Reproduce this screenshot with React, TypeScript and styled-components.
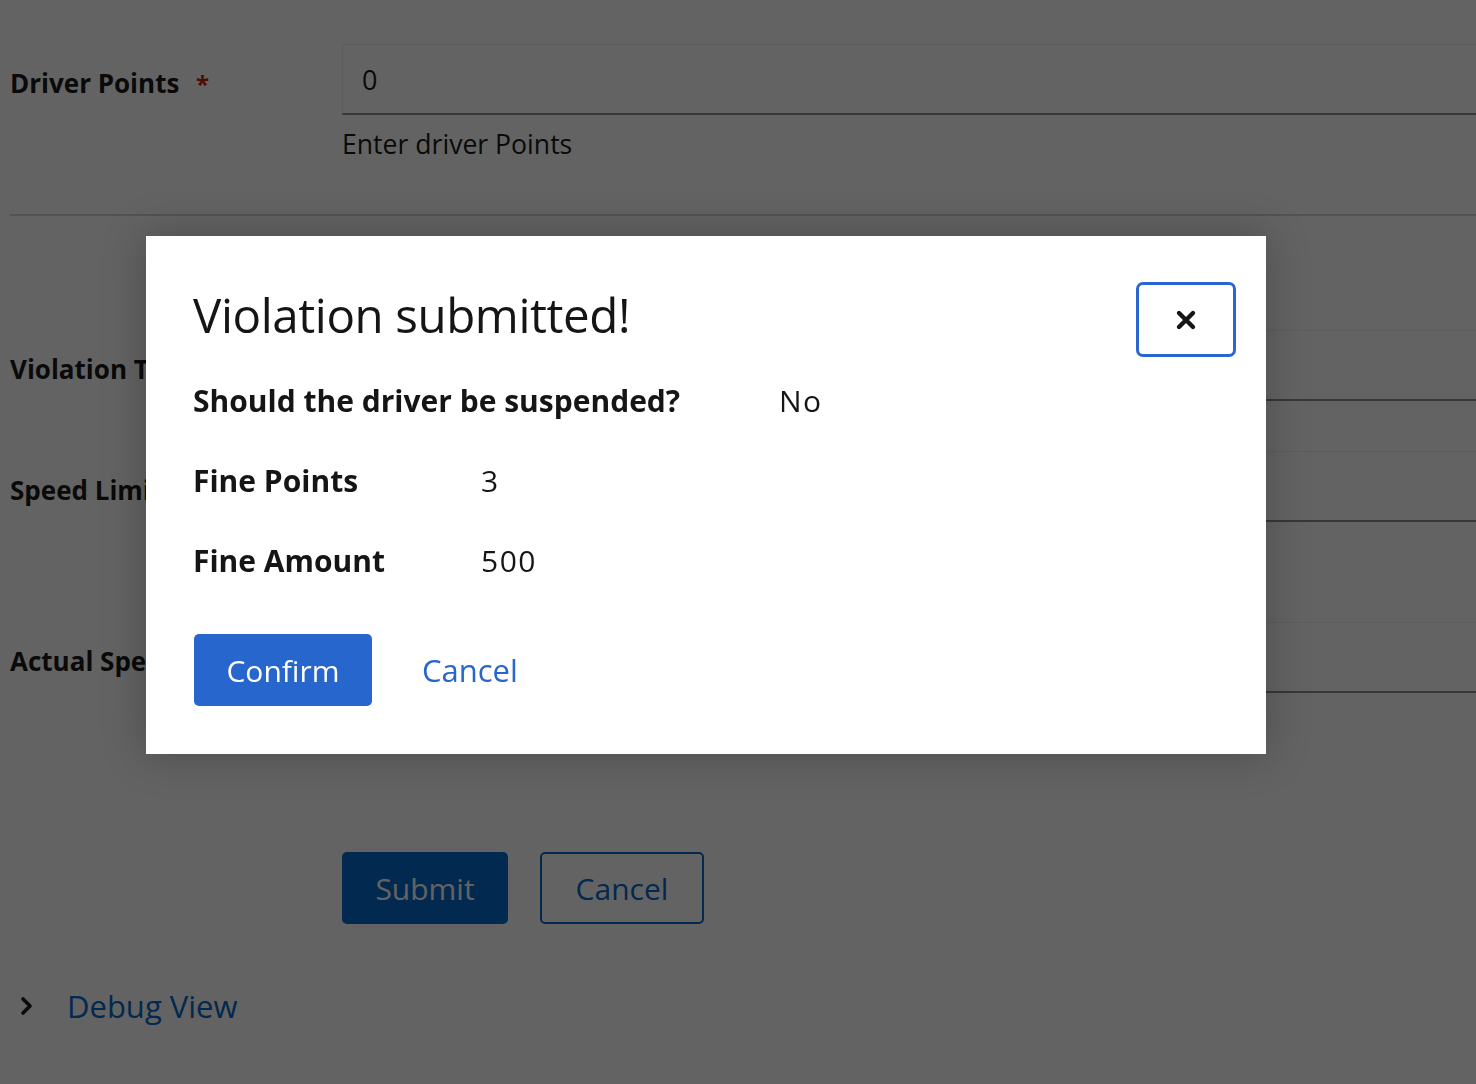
import styled, { createGlobalStyle } from "styled-components";

const GlobalStyle = createGlobalStyle`
  html, body {
    margin: 0;
    padding: 0;
    background: #ffffff;
    font-family: "Open Sans", "Noto Sans", sans-serif;
    color: #151515;
  }
`;

function CloseIcon() {
  return (
    <svg width="22" height="22" viewBox="0 0 22 22">
      <path d="M4 4 L18 18 M18 4 L4 18" stroke="#151515" strokeWidth="4.4" strokeLinecap="round" />
    </svg>
  );
}

function ChevronRight() {
  return (
    <svg width="14" height="20" viewBox="0 0 14 20">
      <path d="M3 3 L10 10 L3 17" stroke="#151515" strokeWidth="3.6" fill="none" strokeLinecap="round" strokeLinejoin="round" />
    </svg>
  );
}

function App() {
  return (
    <>
      <GlobalStyle />
      <Form>
        <FormGroup>
          <Label>
            Driver Points <Required>*</Required>
          </Label>
          <Control>
            <TextInput defaultValue="0" />
            <Helper>Enter driver Points</Helper>
          </Control>
        </FormGroup>
        <Divider />
        <FormGroup $top={114}>
          <Label>Violation Type</Label>
          <Control>
            <TextInput />
          </Control>
        </FormGroup>
        <FormGroup $top={50}>
          <Label>Speed Limit</Label>
          <Control>
            <TextInput />
          </Control>
        </FormGroup>
        <FormGroup $top={100}>
          <Label>Actual Speed</Label>
          <Control>
            <TextInput />
          </Control>
        </FormGroup>
        <Actions>
          <PrimaryButton>Submit</PrimaryButton>
          <SecondaryButton>Cancel</SecondaryButton>
        </Actions>
        <DebugToggle>
          <ChevronRight />
          <DebugLink>Debug View</DebugLink>
        </DebugToggle>
      </Form>

      <Backdrop>
        <Modal>
          <ModalHeader>
            <Title>Violation submitted!</Title>
            <CloseButton aria-label="Close">
              <CloseIcon />
            </CloseButton>
          </ModalHeader>
          <DetailRow $labelWidth={586}>
            <DetailLabel>Should the driver be suspended?</DetailLabel>
            <DetailValue>No</DetailValue>
          </DetailRow>
          <DetailRow $labelWidth={288}>
            <DetailLabel>Fine Points</DetailLabel>
            <DetailValue>3</DetailValue>
          </DetailRow>
          <DetailRow $labelWidth={288}>
            <DetailLabel>Fine Amount</DetailLabel>
            <DetailValue>500</DetailValue>
          </DetailRow>
          <ModalFooter>
            <ConfirmButton>Confirm</ConfirmButton>
            <LinkButton>Cancel</LinkButton>
          </ModalFooter>
        </Modal>
      </Backdrop>
    </>
  );
}

export default App;

const Form = styled.div`
  padding: 44px 0 0 10px;
  height: 1084px;
  box-sizing: border-box;
  overflow: hidden;
`;

const FormGroup = styled.div<{ $top?: number }>`
  display: grid;
  grid-template-columns: 332px 1fr;
  margin-top: ${(p) => p.$top ?? 0}px;
`;

const Label = styled.div`
  padding-top: 20px;
  font-size: 26px;
  line-height: 39px;
  font-weight: 700;
  white-space: nowrap;
`;

const Required = styled.span`
  color: #c9190b;
  margin-left: 10px;
  font-size: 24px;
`;

const Control = styled.div`
  display: flex;
  flex-direction: column;
`;

const TextInput = styled.input`
  height: 71px;
  box-sizing: border-box;
  border: 1px solid #f0f0f0;
  border-bottom: 2px solid #8a8d90;
  border-right: none;
  padding: 0 19px;
  font-family: inherit;
  font-size: 27px;
  color: #151515;
  background: #fff;
  outline: none;
`;

const Helper = styled.div`
  margin-top: 10px;
  font-size: 26.6px;
  line-height: 39px;
  color: #151515;
`;

const Divider = styled.div`
  margin-top: 50px;
  height: 2px;
  background: #d2d2d2;
`;

const Actions = styled.div`
  display: flex;
  gap: 32px;
  margin: 159px 0 0 332px;
`;

const PrimaryButton = styled.button`
  width: 166px;
  height: 72px;
  border: none;
  border-radius: 5px;
  background: #0066cc;
  color: #fff;
  font-family: inherit;
  font-size: 30px;
`;

const SecondaryButton = styled.button`
  width: 164px;
  height: 72px;
  border: 2px solid #0066cc;
  border-radius: 5px;
  background: #fff;
  color: #0066cc;
  font-family: inherit;
  font-size: 30px;
`;

const DebugToggle = styled.div`
  display: flex;
  align-items: center;
  gap: 33px;
  margin: 62px 0 0 10px;
`;

const DebugLink = styled.span`
  color: #0066cc;
  font-size: 31px;
  line-height: 40px;
`;

const Backdrop = styled.div`
  position: fixed;
  inset: 0;
  background: rgba(3, 3, 3, 0.62);
  padding: 236px 0 0 146px;
  box-sizing: border-box;
`;

const Modal = styled.div`
  width: 1120px;
  background: #fff;
  padding: 46px 30px 48px 47px;
  box-sizing: border-box;
  box-shadow: 0 0 40px rgba(3, 3, 3, 0.25);
`;

const ModalHeader = styled.div`
  display: flex;
  justify-content: space-between;
  align-items: center;
  height: 75px;
  margin-bottom: 3px;
`;

const Title = styled.h1`
  margin: 0 0 10px;
  font-size: 47.5px;
  font-weight: 400;
  line-height: 1.2;
  color: #151515;
  letter-spacing: -0.4px;
`;

const CloseButton = styled.button`
  width: 100px;
  height: 75px;
  border: 3px solid #2b65d0;
  border-radius: 7px;
  background: #fff;
  display: flex;
  align-items: center;
  justify-content: center;
  padding: 0;
`;

const DetailRow = styled.div<{ $labelWidth: number }>`
  display: grid;
  grid-template-columns: ${(p) => p.$labelWidth}px 1fr;
  align-items: center;
  height: 80px;
`;

const DetailLabel = styled.div`
  font-size: 30px;
  font-weight: 700;
  color: #151515;
  white-space: nowrap;
`;

const DetailValue = styled.div`
  font-size: 30px;
  color: #151515;
  letter-spacing: 1.5px;
`;

const ModalFooter = styled.div`
  display: flex;
  align-items: center;
  gap: 50px;
  margin-top: 34px;
`;

const ConfirmButton = styled.button`
  width: 178px;
  height: 72px;
  border: none;
  border-radius: 5px;
  background: #2766cc;
  color: #fff;
  font-family: inherit;
  font-size: 30px;
  margin-left: 1px;
`;

const LinkButton = styled.button`
  border: none;
  background: none;
  padding: 0;
  color: #2766cc;
  font-family: inherit;
  font-size: 31px;
`;
